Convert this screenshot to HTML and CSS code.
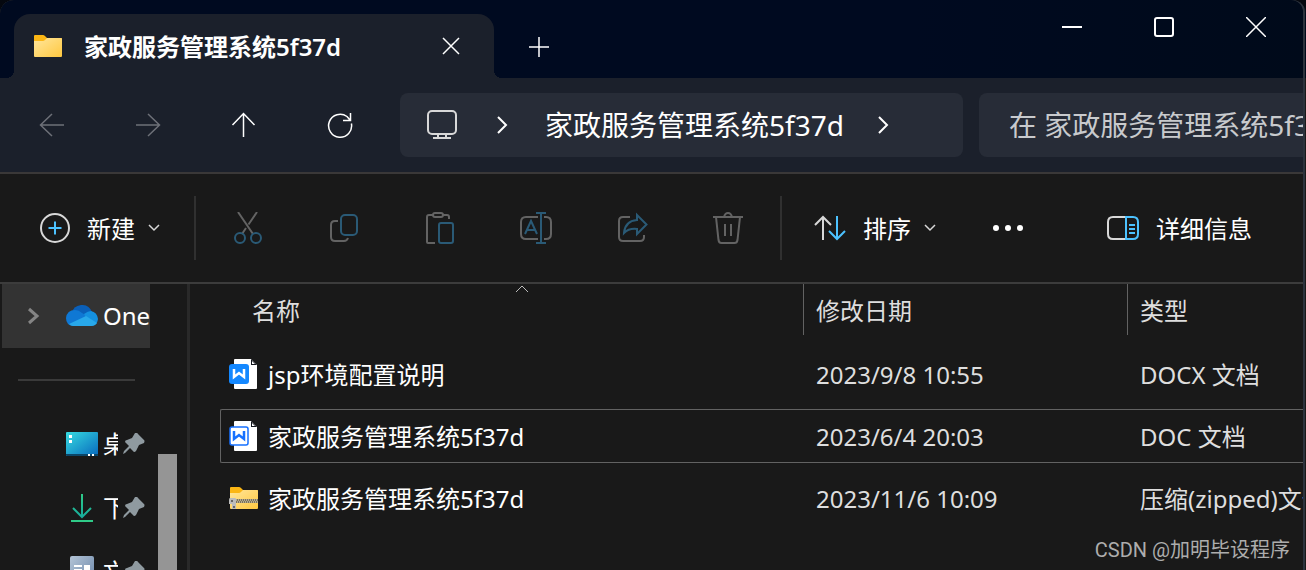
FILE: index.html
```html
<!DOCTYPE html>
<html lang="zh-CN">
<head>
<meta charset="utf-8">
<title>家政服务管理系统5f37d</title>
<link rel="stylesheet" href="styles.css">
</head>
<body>
<div class="window">
    <header class="titlebar">
        <div class="tab">
            <svg class="tab-icon" width="28" height="22" viewBox="0 0 28 22">
                <defs>
                    <linearGradient id="folder" x1="0" y1="0" x2="1" y2="1">
                        <stop offset="0" stop-color="#ffe69c"/>
                        <stop offset="1" stop-color="#ffc840"/>
                    </linearGradient>
                </defs>
                <path d="M0 1q0-1 1-1h8q1 0 2 1l2 2h14q1 0 1 1v8H0z" fill="#fbb614"/>
                <path d="M0 6h9q1 0 2-1l2-2h14q1 0 1 1v17q0 1-1 1H1q-1 0-1-1z" fill="url(#folder)"/>
            </svg>
            <span class="tab-title">家政服务管理系统5f37d</span>
            <button class="tab-close" aria-label="关闭标签页">
                <svg width="18" height="18" viewBox="0 0 18 18"><path d="M1 1l16 16M17 1L1 17" class="line white"/></svg>
            </button>
        </div>
        <button class="new-tab" aria-label="新标签页">
            <svg width="20" height="20" viewBox="0 0 20 20"><path d="M10 0v20M0 10h20" class="line white"/></svg>
        </button>
        <div class="caption">
            <button aria-label="最小化"><svg width="20" height="20" viewBox="0 0 20 20"><path d="M0 10h20" class="line bold white"/></svg></button>
            <button aria-label="最大化"><svg width="20" height="20" viewBox="0 0 20 20"><rect x="1" y="1" width="18" height="18" rx="2" class="line bold white"/></svg></button>
            <button aria-label="关闭"><svg width="20" height="20" viewBox="0 0 20 20"><path d="M0 0l20 20M20 0L0 20" class="line white"/></svg></button>
        </div>
    </header>

    <nav class="navbar">
        <button class="nav-btn" aria-label="后退" disabled>
            <svg width="26" height="26" viewBox="0 0 26 26"><path d="M25 13H1.500M13 2L1.500 13 13 24" class="line dim"/></svg>
        </button>
        <button class="nav-btn" aria-label="前进" disabled>
            <svg width="26" height="26" viewBox="0 0 26 26"><path d="M1 13h23.500M13 2l11.500 11L13 24" class="line dim"/></svg>
        </button>
        <button class="nav-btn" aria-label="向上">
            <svg width="26" height="26" viewBox="0 0 26 26"><path d="M12.500 25V1.500M1.500 13l11-11.500 11 11.500" class="line white"/></svg>
        </button>
        <button class="nav-btn" aria-label="刷新">
            <svg width="26" height="26" viewBox="0 0 26 26"><path d="M24.400 11.500A11.500 11.500 0 1 1 20 4.500L23 8M23.500 1v7.500H16" class="line white"/></svg>
        </button>
        <div class="address">
            <svg class="pc" width="32" height="32" viewBox="0 0 32 32">
                <rect x="2" y="2" width="28" height="23" rx="4" class="line bold light"/>
                <path d="M12 25v4M20 25v4M7 29h18" class="line bold light"/>
            </svg>
            <svg class="crumb-arrow" width="12" height="18" viewBox="0 0 12 18"><path d="M2 1l8 8-8 8" class="line bold white"/></svg>
            <span class="crumb">家政服务管理系统5f37d</span>
            <svg class="crumb-arrow" width="12" height="18" viewBox="0 0 12 18"><path d="M2 1l8 8-8 8" class="line bold white"/></svg>
        </div>
        <input class="search" type="text" aria-label="搜索" placeholder="在 家政服务管理系统5f37d 中搜索">
    </nav>

    <div class="toolbar">
        <button class="tool">
            <svg width="30" height="30" viewBox="0 0 30 30">
                <circle cx="15" cy="15" r="14" class="line bold light"/>
                <path d="M15 8.500v13M8.500 15h13" class="line bold blue"/>
            </svg>
            <span>新建</span>
            <svg class="caret" width="12" height="8" viewBox="0 0 12 8"><path d="M1 1l5 5 5-5" class="line light"/></svg>
        </button>
        <div class="divider"></div>
        <div class="tool-group">
            <button class="icon-btn" aria-label="剪切" disabled>
                <svg width="32" height="32" viewBox="0 0 32 32">
                    <path d="M6 0l15 22M25 0l-8.500 12.500M14 16l-4 6" class="line bold gray"/>
                    <circle cx="8" cy="26" r="5" class="line bold teal"/>
                    <circle cx="24" cy="26" r="5" class="line bold teal"/>
                </svg>
            </button>
            <button class="icon-btn" aria-label="复制" disabled>
                <svg width="32" height="32" viewBox="0 0 32 32">
                    <path d="M10 9H7q-4 0-4 4v12q0 4 4 4h9q3 0 4-3" class="line bold gray"/>
                    <rect x="13" y="3" width="16" height="20" rx="4" class="line bold teal"/>
                </svg>
            </button>
            <button class="icon-btn" aria-label="粘贴" disabled>
                <svg width="32" height="32" viewBox="0 0 32 32">
                    <path d="M11 31H4q-1 0-1-1V5q0-2 2-2h4M19 3h4q2 0 2 2v2" class="line bold gray"/>
                    <rect x="9" y="1" width="10" height="4" rx="2" class="line bold gray"/>
                    <rect x="15" y="11" width="14" height="20" rx="2" class="line bold teal"/>
                </svg>
            </button>
            <button class="icon-btn" aria-label="重命名" disabled>
                <svg width="32" height="32" viewBox="0 0 32 32">
                    <path d="M18 5H6q-5 0-5 5v12q0 5 5 5h12M24 5h2q5 0 5 5v12q0 5-5 5h-2" class="line bold gray"/>
                    <path d="M21 1v30M16 1h10M16 31h10M5 22l6-13 6 13M7 18h8" class="line bold teal"/>
                </svg>
            </button>
            <button class="icon-btn" aria-label="共享" disabled>
                <svg width="32" height="32" viewBox="0 0 32 32">
                    <path d="M14 5H7Q3 5 3 9v16q0 4 4 4h17q4 0 4-4v-2" class="line bold gray"/>
                    <path d="M21 3l9.500 9.500L21 22v-5q-8-1-13 4 1-12 13-13z" class="line bold teal"/>
                </svg>
            </button>
            <button class="icon-btn" aria-label="删除" disabled>
                <svg width="32" height="32" viewBox="0 0 32 32">
                    <path d="M1 5h30M4 5l2.500 23q.500 3 3 3h13q2.500 0 3-3L28 5M12 5q1-4 4-4t4 4M13 12v12M19 12v12" class="line bold gray"/>
                </svg>
            </button>
        </div>
        <div class="divider"></div>
        <button class="tool sort">
            <svg width="32" height="26" viewBox="0 0 32 26">
                <path d="M9 25V2M1 10l8-8 8 8" class="line bold light"/>
                <path d="M23 1v23M15 16l8 8 8-8" class="line bold blue"/>
            </svg>
            <span>排序</span>
            <svg class="caret" width="12" height="8" viewBox="0 0 12 8"><path d="M1 1l5 5 5-5" class="line light"/></svg>
        </button>
        <button class="more" aria-label="查看更多">
            <svg width="32" height="8" viewBox="0 0 32 8" fill="#fff"><circle cx="4" cy="4" r="3"/><circle cx="16" cy="4" r="3"/><circle cx="28" cy="4" r="3"/></svg>
        </button>
        <button class="tool details">
            <svg width="32" height="26" viewBox="0 0 32 26">
                <path d="M18 2H6Q1 2 1 7v12q0 5 5 5h12" class="line bold light"/>
                <path d="M19 2h7q5 0 5 5v12q0 5-5 5h-7zM22 10h6M22 14h6M22 18h6" class="line bold blue"/>
            </svg>
            <span>详细信息</span>
        </button>
    </div>

    <main class="content">
        <aside class="sidebar">
            <div class="tree">
                <div class="node selected">
                    <svg class="expander" width="14" height="18" viewBox="0 0 14 18"><path d="M3 2l8 7-8 7" stroke="#858585" stroke-width="3" fill="none"/></svg>
                    <svg class="node-icon" width="32" height="22" viewBox="0 0 32 22">
                        <path d="M6 8q1-7 9-8 8-.500 11 7l-9 5z" fill="#0a5fb8"/>
                        <path d="M7 21Q0 20 0 13 1 5 9 5q4 0 7 3l10 6-16 7z" fill="#0f78d4"/>
                        <path d="M18 9q4-3 7-3 6 1 7 8-1 7-7 7z" fill="#1490df"/>
                        <path d="M3 19l17-8 11 7q-2 3-6 3H7q-2 0-4-2z" fill="#28a8ea"/>
                    </svg>
                    <span class="node-text">OneDrive</span>
                </div>
                <div class="rule"></div>
                <div class="node">
                    <svg class="node-icon" width="32" height="24" viewBox="0 0 32 24">
                        <defs>
                            <linearGradient id="desk" x1="0" y1="0" x2="1" y2="1">
                                <stop offset="0" stop-color="#36dbe0"/>
                                <stop offset="1" stop-color="#0869bd"/>
                            </linearGradient>
                        </defs>
                        <rect width="32" height="24" rx="1" fill="url(#desk)"/>
                        <path d="M0 22h32v1q0 1-1 1H1q-1 0-1-1z" fill="#0b4668"/>
                        <path d="M3 3h3v3H3zM3 8h3v3H3zM22 22h2v2h-2zM26 22h2v2h-2z" fill="#fff"/>
                    </svg>
                    <span class="node-text short">桌面</span>
                    <svg class="pin" width="22" height="22" viewBox="0 0 22 22"><path d="M12 0q2-1 3 1l6 6q1 1 0 3l-5 2-3 6q-2 2-3 0l-3-3-5 5-2 1 1-3 5-5-4-4q0-2 2-2l5-2z" fill="#8f9aa0"/></svg>
                </div>
                <div class="node">
                    <svg class="node-icon" width="32" height="28" viewBox="0 0 32 28">
                        <defs>
                            <linearGradient id="down" x1="0" y1="0" x2="0" y2="28" gradientUnits="userSpaceOnUse">
                                <stop offset="0" stop-color="#2fcb88"/>
                                <stop offset="1" stop-color="#12a5a0"/>
                            </linearGradient>
                        </defs>
                        <path d="M16 0v23M7 14l9 9 9-9" stroke="url(#down)" stroke-width="2" fill="none"/>
                        <path d="M5 27h22" stroke="#2fcb88" stroke-width="2"/>
                    </svg>
                    <span class="node-text short">下载</span>
                    <svg class="pin" width="22" height="22" viewBox="0 0 22 22"><path d="M12 0q2-1 3 1l6 6q1 1 0 3l-5 2-3 6q-2 2-3 0l-3-3-5 5-2 1 1-3 5-5-4-4q0-2 2-2l5-2z" fill="#8f9aa0"/></svg>
                </div>
                <div class="node">
                    <svg class="node-icon" width="32" height="32" viewBox="0 0 32 32">
                        <defs>
                            <linearGradient id="docs" x1="0" y1="0" x2="1" y2="1">
                                <stop offset="0" stop-color="#b4c4d6"/>
                                <stop offset="1" stop-color="#6684a8"/>
                            </linearGradient>
                        </defs>
                        <rect x="4" width="24" height="32" rx="2" fill="url(#docs)"/>
                        <path d="M8 9h8v2H8zM8 13h8v2H8zM18 9h6v6h-6z" fill="#fff"/>
                    </svg>
                    <span class="node-text short">文档</span>
                    <svg class="pin" width="22" height="22" viewBox="0 0 22 22"><path d="M12 0q2-1 3 1l6 6q1 1 0 3l-5 2-3 6q-2 2-3 0l-3-3-5 5-2 1 1-3 5-5-4-4q0-2 2-2l5-2z" fill="#8f9aa0"/></svg>
                </div>
            </div>
            <div class="scrollbar"><div class="thumb"></div></div>
        </aside>

        <section class="files">
            <table>
                <thead>
                    <tr>
                        <th class="name-head">名称
                            <svg class="sort-mark" width="14" height="8" viewBox="0 0 14 8"><path d="M1 7l6-6 6 6" stroke="#bbb" fill="none"/></svg>
                        </th>
                        <th>修改日期</th>
                        <th>类型</th>
                    </tr>
                </thead>
                <tbody>
                    <tr>
                        <td class="name">
                            <svg width="30" height="32" viewBox="0 0 30 32">
                                <path d="M6 0h16l6 6v23q0 1-1 1H6q-1 0-1-1V1q0-1 1-1z" fill="#fff"/>
                                <path d="M22 0l6 6h-6z" fill="#10131a"/><path d="M23 2l3 3h-3z" fill="#fff"/>
                                <rect x="0" y="5" width="20" height="20" rx="3" fill="#1488ff"/>
                                <path d="M5 10v8l5-4 5 4v-8" stroke="#fff" stroke-width="2.500" fill="none"/>
                            </svg>
                            <span>jsp环境配置说明</span>
                        </td>
                        <td>2023/9/8 10:55</td>
                        <td>DOCX 文档</td>
                    </tr>
                    <tr class="focused">
                        <td class="name">
                            <svg width="30" height="32" viewBox="0 0 30 32">
                                <path d="M6 0h16l6 6v23q0 1-1 1H6q-1 0-1-1V1q0-1 1-1z" fill="#fff"/>
                                <path d="M22 0l6 6h-6z" fill="#10131a"/><path d="M23 2l3 3h-3z" fill="#fff"/>
                                <rect x="1" y="6" width="18" height="18" rx="2" fill="#fff" stroke="#1670ff" stroke-width="1.500"/>
                                <path d="M5 10v8l5-4 5 4v-8" stroke="#1670ff" stroke-width="2.500" fill="none"/>
                            </svg>
                            <span>家政服务管理系统5f37d</span>
                        </td>
                        <td>2023/6/4 20:03</td>
                        <td>DOC 文档</td>
                    </tr>
                    <tr>
                        <td class="name">
                            <svg width="30" height="24" viewBox="0 0 30 24">
                                <path d="M1 1q0-1 1-1h8q1 0 2 1l2 2h14q1 0 1 1v8H1z" fill="#fbb614"/>
                                <path d="M1 6h9q1 0 2-1l2-2h14q1 0 1 1v17q0 1-1 1H2q-1 0-1-1z" fill="url(#folder)"/>
                                <path d="M5 14h24" stroke="#7d735a" stroke-width="4"/>
                                <path d="M7 13h22M8 15h21" stroke="#eee6cc" stroke-width="1" stroke-dasharray="1 1"/>
                                <path d="M1 11h5q1 0 1 1v10H3v-5H0v-4q0-2 1-2z" fill="#bcbcbc"/>
                                <path d="M2 13h2v2H2zM4 19h2v2H4z" fill="#666"/>
                            </svg>
                            <span>家政服务管理系统5f37d</span>
                        </td>
                        <td>2023/11/6 10:09</td>
                        <td>压缩(zipped)文件夹</td>
                    </tr>
                </tbody>
            </table>
        </section>
    </main>
    <div class="watermark">CSDN @加明毕设程序</div>
</div>
</body>
</html>
```

FILE: styles.css
```css
* {
  box-sizing: border-box;
}

body {
  margin: 0;
  background: #05080f;
  color: #fff;
  font-family: "Noto Sans", "Noto Sans CJK SC", sans-serif;
  font-size: 24px;
  line-height: 32px;
}

button {
  display: flex;
  align-items: center;
  justify-content: center;
  padding: 0;
  border: none;
  background: none;
  color: inherit;
  font: inherit;
}

svg {
  display: block;
  flex: none;
}

.line {
  fill: none;
  stroke-width: 1.5;
}

.bold { stroke-width: 2; }
.white { stroke: #fff; }
.light { stroke: #d8d8d8; }
.dim { stroke: #6d7078; }
.gray { stroke: #636363; }
.teal { stroke: #2a5a76; }
.blue { stroke: #4cc2ff; }

.window {
  position: relative;
  display: flex;
  flex-direction: column;
  height: 100vh;
  padding-right: 3px;
  overflow: hidden;
  border-radius: 14px 14px 0 0;
  background: #191919;
  white-space: nowrap;
}

/* thin frame round the window */
.window::after {
  content: "";
  position: absolute;
  inset: -2px 1px -2px -2px;
  border: 2px solid #2c333d;
  border-radius: 16px 14px 0 0;
  pointer-events: none;
}

/* title bar */
.titlebar {
  display: flex;
  height: 78px;
  margin-right: -3px;
  padding: 0 4px 0 14px;
  background: linear-gradient(90deg, #000a20 70%, #000a1a);
}

.tab {
  position: relative;
  display: flex;
  align-items: center;
  width: 480px;
  margin-top: 14px;
  padding: 0 32px 0 20px;
  border-radius: 16px 16px 0 0;
  background: #1b202b;
}

.tab::before,
.tab::after {
  content: "";
  position: absolute;
  bottom: 0;
  width: 8px;
  height: 8px;
}

.tab::before {
  right: 100%;
  background: radial-gradient(circle at 0 0, transparent 8px, #1b202b 8px);
}

.tab::after {
  left: 100%;
  background: radial-gradient(circle at 100% 0, transparent 8px, #1b202b 8px);
}

.tab-title {
  flex: 1;
  margin-left: 22px;
  padding-top: 2px;
  font-weight: 600;
}

.tab-close {
  width: 22px;
  height: 32px;
}

.new-tab {
  width: 90px;
  margin-top: 16px;
}

.caption {
  display: flex;
  margin-left: auto;
}

.caption button {
  width: 92px;
  height: 54px;
}

/* navigation */
.navbar {
  display: flex;
  align-items: center;
  height: 96px;
  padding-left: 4px;
  border-bottom: 2px solid #3a3838;
  background: #1b202b;
}

.nav-btn {
  width: 96px;
  height: 64px;
}

.address {
  display: flex;
  flex: 1;
  align-items: center;
  height: 64px;
  margin: 0 16px 0 12px;
  padding-left: 26px;
  border-radius: 8px;
  background: #272c37;
  font-size: 28px;
}

.crumb-arrow {
  margin-left: 38px;
}

.crumb {
  margin-left: 37px;
}

.crumb + .crumb-arrow {
  margin-left: 33px;
}

.search {
  width: 324px;
  height: 64px;
  padding: 0 0 0 30px;
  border: none;
  border-radius: 8px 0 0 8px;
  background: #272c37;
  color: #fff;
  font: inherit;
  font-size: 28px;
}

.search::placeholder {
  color: #c8cacd;
}

/* commands */
.toolbar {
  display: flex;
  align-items: center;
  height: 110px;
  padding: 0 51px 0 40px;
  border-bottom: 2px solid #3c3c3c;
}

.tool {
  gap: 17px;
}

.tool span {
  padding-top: 2px;
}

.caret {
  margin-left: -4px;
}

.divider {
  width: 2px;
  height: 64px;
  margin-left: 34px;
  background: #303030;
}

.tool-group {
  display: flex;
  margin: 0 -30px 0 4px;
}

.icon-btn {
  width: 96px;
  height: 64px;
}

.sort {
  margin-left: 32px;
}

.more {
  margin-left: 56px;
}

.details {
  margin-left: auto;
}

/* panes */
.content {
  display: flex;
  flex: 1;
  min-height: 0;
}

.sidebar {
  display: flex;
  width: 190px;
  padding-left: 2px;
  border-right: 3px solid #292929;
}

.tree {
  width: 148px;
  overflow: hidden;
}

.node {
  display: flex;
  align-items: center;
  height: 64px;
  padding-left: 64px;
}

.selected {
  padding-left: 24px;
  background: #333;
}

.expander {
  margin-right: 26px;
}

.node-text {
  margin-left: 5px;
}

.short {
  width: 15px;
  overflow: hidden;
}

.pin {
  margin-left: 5px;
}

.rule {
  height: 2px;
  margin: 31px 15px 31px 16px;
  background: #3a3a3a;
}

.scrollbar {
  width: 19px;
  margin-left: 8px;
  padding-top: 170px;
}

.thumb {
  height: 100%;
  background: #959595;
}

.files {
  flex: 1;
  min-width: 0;
  padding-left: 30px;
  overflow: hidden;
}

table,
thead,
tbody {
  display: block;
}

tr {
  display: grid;
  grid-template-columns: 584px 324px 1fr;
  align-items: center;
  height: 54px;
  margin-bottom: 8px;
  border: 1px solid transparent;
  border-right: none;
}

thead tr {
  align-items: stretch;
  height: 51px;
  margin-bottom: 12px;
  border: none;
}

th,
td {
  min-width: 0;
  padding: 2px 0 0 11px;
  color: #dedede;
  font-weight: normal;
  text-align: left;
}

th {
  padding: 11px 0 0 12px;
  border-right: 1px solid #626262;
}

th:last-child {
  border-right: none;
}

.name-head {
  position: relative;
  margin-left: 20px;
}

.sort-mark {
  position: absolute;
  top: 1px;
  left: 50%;
  transform: translateX(-50%);
}

.focused {
  border-color: #626262;
  border-radius: 2px 0 0 2px;
}

.name {
  display: flex;
  align-items: center;
  gap: 9px;
  padding-left: 8px;
  color: #fff;
}

.watermark {
  position: absolute;
  right: 16px;
  bottom: 4px;
  color: #adadad;
  font-family: Roboto, "Noto Sans CJK SC", sans-serif;
  font-size: 20px;
}
```
